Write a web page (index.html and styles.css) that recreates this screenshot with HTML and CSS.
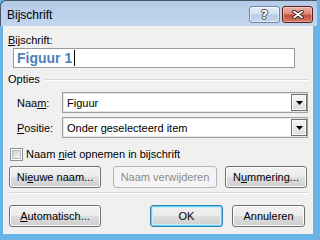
FILE: index.html
```html
<!DOCTYPE html>
<html lang="nl">
<head>
<meta charset="utf-8">
<title>Bijschrift</title>
<link rel="stylesheet" href="styles.css">
</head>
<body>
<div class="window">
  <div class="titlebar">
    <span class="title">Bijschrift</span>
    <div class="caption-buttons">
      <div class="cap help"><span class="qmark">?</span></div>
      <div class="cap close">
        <svg width="12" height="9" viewBox="0 0 12 9">
          <path d="M2 1.5 L10 7.5 M10 1.5 L2 7.5" stroke="#3a1610" stroke-width="3.6" stroke-linecap="round" fill="none"/>
          <path d="M2 1.5 L10 7.5 M10 1.5 L2 7.5" stroke="#ffffff" stroke-width="1.8" stroke-linecap="round" fill="none"/>
        </svg>
      </div>
    </div>
  </div>
  <div class="client">
    <div class="field-label"><u>B</u>ijschrift:</div>
    <div class="textbox"><span class="caption-text">Figuur 1</span><span class="caret"></span></div>
    <div class="group-head"><span>Opties</span><span class="rule"></span></div>
    <div class="row first">
      <span class="row-label">Naa<u>m</u>:</span>
      <div class="combo"><span class="combo-text">Figuur</span><span class="drop"><svg width="7" height="4" viewBox="0 0 7 4"><polygon points="0,0 7,0 3.5,4" fill="#000"/></svg></span></div>
    </div>
    <div class="row">
      <span class="row-label"><u>P</u>ositie:</span>
      <div class="combo"><span class="combo-text">Onder geselecteerd item</span><span class="drop"><svg width="7" height="4" viewBox="0 0 7 4"><polygon points="0,0 7,0 3.5,4" fill="#000"/></svg></span></div>
    </div>
    <div class="check-row">
      <span class="checkbox"></span>
      <span class="check-label">Naam <u>n</u>iet opnemen in bijschrift</span>
    </div>
    <div class="btn-row top">
      <div class="btn w-new">Ni<u>e</u>uwe naam...</div>
      <div class="btn disabled w-del">Naam verwijderen</div>
      <div class="btn w-num">N<u>u</u>mmering...</div>
    </div>
    <div class="sep"></div>
    <div class="btn-row bottom">
      <div class="btn w-new"><u>A</u>utomatisch...</div>
      <div class="btn default w-ok">OK</div>
      <div class="btn w-cancel">Annuleren</div>
    </div>
  </div>
</div>
</body>
</html>
```

FILE: styles.css
```css
html, body {
  margin: 0;
  padding: 0;
}
body {
  width: 317px;
  height: 237px;
  overflow: hidden;
  background: #69b3e7;
  font-family: "Liberation Sans", Arial, sans-serif;
  font-size: 11px;
  color: #000;
}
.window {
  width: 317px;
  height: 237px;
  display: flex;
  flex-direction: column;
}
.titlebar {
  flex: none;
  height: 26px;
  box-sizing: border-box;
  border-top: 1px solid #4a5566;
  border-left: 1px solid #4a5566;
  border-top-left-radius: 6px;
  background: linear-gradient(#b4cbe8, #c2d6ee);
  display: flex;
  align-items: flex-start;
  padding-left: 6px;
}
.title {
  font-size: 12px;
  line-height: 14px;
  margin-top: 7px;
  color: #000;
}
.caption-buttons {
  margin-left: auto;
  margin-right: 4px;
  margin-top: 5px;
  display: flex;
  gap: 2px;
}
.cap {
  width: 31px;
  height: 17px;
  box-sizing: border-box;
  border-radius: 3px;
  display: flex;
  align-items: center;
  justify-content: center;
}
.help {
  border: 1px solid #6f86a3;
  background: linear-gradient(#e7eff9 0%, #cfdeef 48%, #b6cbe5 52%, #c6d8ee 100%);
  box-shadow: inset 0 0 0 1px rgba(255,255,255,0.5);
}
.qmark {
  font-family: "DejaVu Sans", sans-serif;
  font-weight: bold;
  font-size: 12px;
  line-height: 12px;
  color: #fff;
  text-shadow: 1px 0 #4b4b4b, -1px 0 #4b4b4b, 0 1px #4b4b4b, 0 -1px #4b4b4b;
}
.close {
  border: 1px solid #5a1e17;
  background: linear-gradient(#eab3a7 0%, #d98a7a 45%, #c4503c 55%, #d57b68 100%);
  box-shadow: inset 0 0 0 1px rgba(255,255,255,0.35);
}
.client {
  flex: 1;
  margin: 0 4px 3px 3px;
  background: #f0f0f0;
  padding-top: 8px;
  display: flex;
  flex-direction: column;
}
.field-label {
  line-height: 13px;
  margin-left: 5px;
}
.textbox {
  margin: 1px 0 0 10px;
  width: 282px;
  height: 20px;
  box-sizing: border-box;
  border: 1px solid #9a9a9a;
  background: #fff;
  display: flex;
  align-items: center;
  padding-left: 3px;
}
.caption-text {
  font-weight: bold;
  font-size: 14px;
  color: #4f81bd;
  line-height: 16px;
}
.caret {
  width: 1px;
  height: 16px;
  background: #000;
  margin-left: 2px;
}
.group-head {
  margin: 5px 4px 0 5px;
  line-height: 13px;
  display: flex;
  align-items: center;
}
.rule {
  flex: 1;
  margin-left: 5px;
  border-top: 1px solid #d5dadf;
  border-bottom: 1px solid #fff;
}
.row {
  display: flex;
  align-items: center;
  margin-top: 4px;
  height: 21px;
}
.row.first {
  margin-top: 6px;
}
.row-label {
  margin-left: 14px;
  width: 45px;
}
.combo {
  width: 246px;
  height: 21px;
  box-sizing: border-box;
  border: 1px solid #a0a0a0;
  box-shadow: inset 0 0 0 1px #e6e6e6;
  background: #fff;
  display: flex;
  align-items: center;
  padding: 1px 0 1px 1px;
}
.combo-text {
  padding-left: 3px;
}
.drop {
  margin-left: auto;
  width: 16px;
  height: 17px;
  box-sizing: border-box;
  border: 1px solid #707070;
  background: linear-gradient(#f6f6f6, #dcdcdc);
  box-shadow: inset 0 0 0 1px #fbfbfb;
  display: flex;
  align-items: center;
  justify-content: center;
}
.drop svg {
  display: block;
}
.check-row {
  display: flex;
  align-items: center;
  margin-top: 10px;
  height: 13px;
}
.checkbox {
  width: 13px;
  height: 13px;
  box-sizing: border-box;
  margin-left: 7px;
  border: 1px solid #8e8f8f;
  background: #fff;
  position: relative;
}
.checkbox::after {
  content: "";
  position: absolute;
  left: 1px;
  top: 1px;
  width: 9px;
  height: 9px;
  box-sizing: border-box;
  border: 1px solid #b5b9be;
  background: linear-gradient(135deg, #cdd1d6, #f7f7f7);
}
.check-label {
  margin-left: 3px;
  line-height: 13px;
}
.btn-row {
  display: flex;
  margin-left: 6px;
}
.btn-row.top {
  margin-top: 5px;
  gap: 12px;
}
.btn-row.top .w-num {
  margin-left: -4px;
}
.btn-row.bottom {
  margin-top: 11px;
}
.btn {
  height: 22px;
  box-sizing: border-box;
  border: 1px solid #707070;
  border-radius: 3px;
  background: linear-gradient(#f2f2f2 0%, #ebebeb 48%, #dddddd 52%, #cfcfcf 100%);
  box-shadow: inset 0 0 0 1px #fcfcfc;
  display: flex;
  align-items: center;
  justify-content: center;
  line-height: 13px;
}
.btn.disabled {
  border-color: #b5b8ba;
  background: #f4f4f4;
  box-shadow: none;
  color: #8c8c8c;
}
.btn.default {
  border-color: #3c7fb1;
  box-shadow: inset 0 0 0 1px #5fd0f6, inset 0 0 0 2px #cbeefb;
}
.w-new { width: 92px; }
.w-del { width: 104px; }
.w-num { width: 82px; }
.w-ok { width: 73px; margin-left: 49px; }
.w-cancel { width: 73px; margin-left: 9px; }
.sep {
  margin: 4px 5px 0 6px;
  border-top: 1px solid #d5dadf;
  border-bottom: 1px solid #fff;
}
```
